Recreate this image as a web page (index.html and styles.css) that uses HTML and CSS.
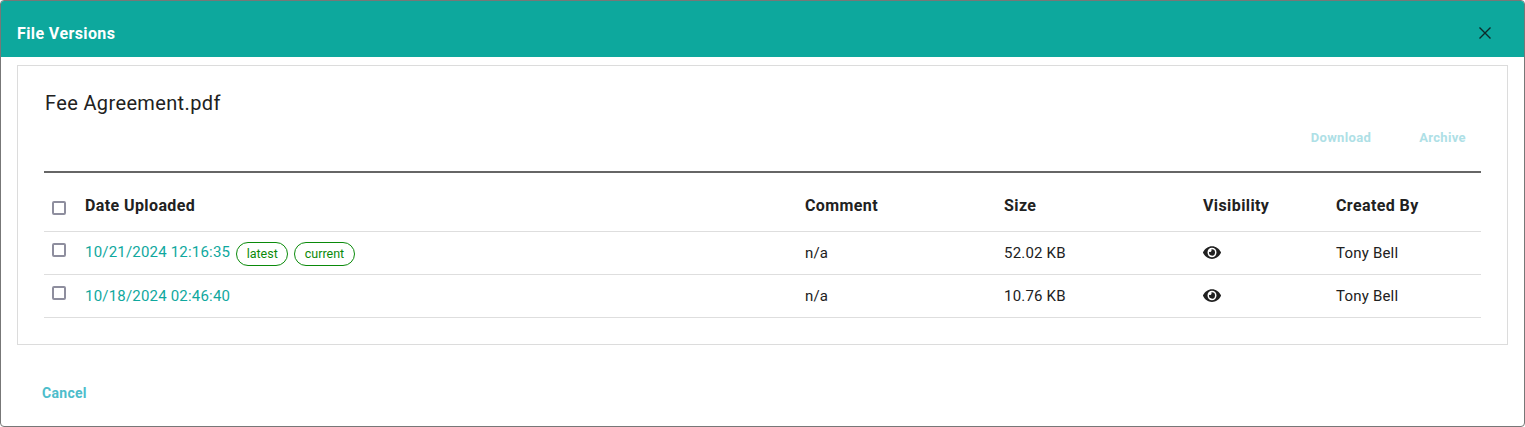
FILE: index.html
```html
<!DOCTYPE html>
<html lang="en">
<head>
<meta charset="utf-8">
<title>File Versions</title>
<link rel="stylesheet" href="styles.css">
</head>
<body>
<div class="dialog">
  <header class="dialog-header">
    <h1 class="dialog-title">File Versions</h1>
    <button class="close-btn" type="button" aria-label="Close">
      <svg width="14" height="14" viewBox="0 0 14 14"><path d="M1.5 1.5l11 11M12.5 1.5l-11 11" stroke="#0d2a2a" stroke-width="1.4" fill="none"/></svg>
    </button>
  </header>
  <main class="dialog-body">
    <section class="panel">
      <h2 class="file-name">Fee Agreement.pdf</h2>
      <div class="actions">
        <span class="action">Download</span>
        <span class="action">Archive</span>
      </div>
      <table class="versions">
        <thead>
          <tr>
            <th class="col-check"><span class="checkbox"></span></th>
            <th class="col-date">Date Uploaded</th>
            <th class="col-comment">Comment</th>
            <th class="col-size">Size</th>
            <th class="col-vis">Visibility</th>
            <th>Created By</th>
          </tr>
        </thead>
        <tbody>
          <tr>
            <td class="col-check"><span class="checkbox"></span></td>
            <td class="date-tags"><a class="date-link">10/21/2024 12:16:35</a><span class="tag">latest</span><span class="tag">current</span></td>
            <td>n/a</td>
            <td>52.02 KB</td>
            <td><svg class="eye" viewBox="0 0 576 512" preserveAspectRatio="none"><path d="M572.52 241.4C518.29 135.59 410.93 64 288 64S57.68 135.64 3.48 241.41a32.35 32.35 0 0 0 0 29.19C57.71 376.41 165.07 448 288 448s230.32-71.64 284.52-177.41a32.35 32.35 0 0 0 0-29.19zM288 400a144 144 0 1 1 144-144 143.93 143.93 0 0 1-144 144zm0-240a95.31 95.31 0 0 0-25.31 3.79 47.85 47.85 0 0 1-66.9 66.9A95.78 95.78 0 1 0 288 160z"/></svg></td>
            <td>Tony Bell</td>
          </tr>
          <tr>
            <td class="col-check"><span class="checkbox"></span></td>
            <td><a class="date-link">10/18/2024 02:46:40</a></td>
            <td>n/a</td>
            <td>10.76 KB</td>
            <td><svg class="eye" viewBox="0 0 576 512" preserveAspectRatio="none"><path d="M572.52 241.4C518.29 135.59 410.93 64 288 64S57.68 135.64 3.48 241.41a32.35 32.35 0 0 0 0 29.19C57.71 376.41 165.07 448 288 448s230.32-71.64 284.52-177.41a32.35 32.35 0 0 0 0-29.19zM288 400a144 144 0 1 1 144-144 143.93 143.93 0 0 1-144 144zm0-240a95.31 95.31 0 0 0-25.31 3.79 47.85 47.85 0 0 1-66.9 66.9A95.78 95.78 0 1 0 288 160z"/></svg></td>
            <td>Tony Bell</td>
          </tr>
        </tbody>
      </table>
    </section>
  </main>
  <footer class="dialog-footer">
    <span class="cancel">Cancel</span>
  </footer>
</div>
</body>
</html>
```

FILE: styles.css
```css
* { box-sizing: border-box; }
html, body { margin: 0; height: 100%; background: #fff; }
body { font-family: Roboto, "Liberation Sans", sans-serif; color: #212121; }
.dialog {
  position: relative;
  height: 427px;
  border: 1px solid #777;
  border-radius: 4px;
  overflow: hidden;
  background: #fff;
}
.dialog::before {
  content: "";
  position: absolute;
  top: -1px;
  left: 760px;
  width: 80px;
  height: 1px;
  background: linear-gradient(90deg, #777, #c4c4c4 50%, #777);
}
.dialog-header {
  height: 56px;
  background: #0da89d;
  display: flex;
  align-items: center;
  justify-content: space-between;
  padding: 8px 32px 0 16px;
}
.dialog-title { margin: 0; font-size: 16px; font-weight: 700; color: #fff; letter-spacing: 0.4px; }
.close-btn { background: none; border: 0; padding: 0; width: 14px; height: 14px; display: flex; }
.dialog-body { padding: 8px 16px 0; }
.panel {
  height: 280px;
  border: 1px solid #dcdcdc;
  padding: 24px 26px 0;
}
.file-name { margin: 0 0 0 1px; font-size: 20px; font-weight: 400; line-height: 26px; color: #212121; letter-spacing: 0.36px; }
.actions {
  display: flex;
  justify-content: flex-end;
  gap: 48px;
  padding: 12px 15px 0 0;
  height: 55px;
}
.action { font-size: 13px; font-weight: 700; line-height: 20px; color: #aee0e6; letter-spacing: 0.35px; }
.versions {
  width: 1437px;
  border-collapse: collapse;
  table-layout: fixed;
  border-top: 2px solid #666;
  font-size: 15px;
  letter-spacing: 0.2px;
}
.versions th, .versions td { text-align: left; padding: 0; border-bottom: 1px solid #dedede; }
.versions th { height: 59px; font-size: 16px; letter-spacing: 0.4px; font-weight: 700; color: #212121; padding-top: 7px; }
.versions td { height: 43px; color: #212121; }
.versions td.date-tags { padding-top: 2px; }
.col-check { width: 41px; padding-left: 8px !important; }
.col-date { width: 720px; }
.col-comment { width: 199px; }
.col-size { width: 199px; }
.col-vis { width: 133px; }
.checkbox {
  display: block;
  width: 14px;
  height: 14px;
  border: 2px solid #8e8e9e;
  border-radius: 2px;
}
th .checkbox { position: relative; top: 3px; }
td .checkbox { position: relative; top: -3px; }
.date-link { color: #0fa89e; }
.tag {
  display: inline-block;
  margin-left: 6px;
  padding: 0 9.5px;
  height: 24px;
  line-height: 22px;
  border: 1px solid #0a8a0a;
  border-radius: 12px;
  font-size: 12.5px;
  letter-spacing: 0;
  color: #0a8a0a;
  vertical-align: -1px;
}
.eye { display: block; width: 18px; height: 17px; fill: #212121; }
.dialog-footer { padding: 38px 0 0 41px; }
.cancel { font-size: 14px; font-weight: 700; color: #4dbdcb; line-height: 20px; display: block; letter-spacing: 0.3px; }
```
